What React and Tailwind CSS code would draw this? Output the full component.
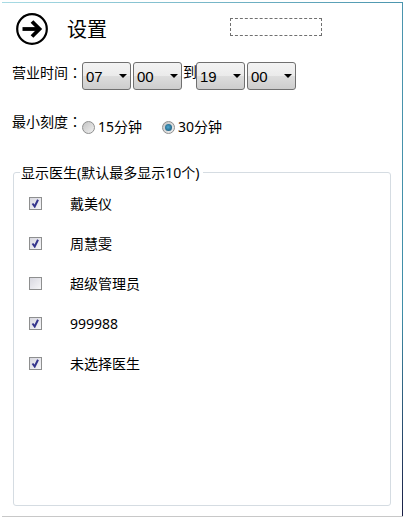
import React from 'react';

const FONT = { fontFamily: '"Noto Sans", "Noto Sans CJK SC", sans-serif' };

const ArrowIcon = () => (
  <svg width="34" height="34" viewBox="0 0 34 34" className="block mb-[2px]">
    <circle cx="17" cy="17" r="14.8" fill="none" stroke="#000" strokeWidth="2.2" />
    <path d="M7.5 17H24" stroke="#000" strokeWidth="3.8" fill="none" />
    <path d="M17 9.5L24.5 17L17 24.5" stroke="#000" strokeWidth="3.8" fill="none" />
  </svg>
);

const Select = ({ value }) => (
  <div className="w-[49px] h-[28px] flex items-center justify-between pl-[3px] pr-[3px] border border-[#707070] rounded-[3px] bg-[linear-gradient(#f3f3f3_0%,#ebebeb_48%,#dddddd_50%,#cdcdcd_100%)] text-[15px] leading-none text-black font-['Liberation_Sans']">
    <span>{value}</span>
    <span className="w-0 h-0 border-x-[4px] border-x-transparent border-t-[4px] border-t-black" />
  </div>
);

const Radio = ({ checked, label, className }) => (
  <div className={`flex items-center ${className}`}>
    <span className="w-[13px] h-[13px] rounded-full border border-[#8e8f8f] bg-[linear-gradient(135deg,#c4c4c4,#f0f0f0)] flex items-center justify-center">
      {checked && <span className="w-[7px] h-[7px] rounded-full bg-[radial-gradient(circle_at_45%_45%,#4fa8d0,#0f4a6a)]" />}
    </span>
    <span className="ml-[3px] text-[14px] leading-[20px] text-black">{label}</span>
  </div>
);

const Doctor = ({ name, checked }) => (
  <div className="h-[40px] flex items-start">
    <span className="mt-[1px] w-[13px] h-[13px] border border-[#8e8f8f] bg-[linear-gradient(135deg,#d8d8e0,#f6f6f8)] flex items-center justify-center">
      {checked && (
        <svg width="9" height="9" viewBox="0 0 9 9">
          <path d="M1.5 4.5L3.7 7.5L7 0.8" stroke="#34348c" strokeWidth="2" fill="none" />
        </svg>
      )}
    </span>
    <span className="ml-[28px] text-[14px] leading-[16px] text-black">{name}</span>
  </div>
);

const Label = ({ text }) => (
  <span className="w-[70px] text-[14px] leading-[20px] text-black whitespace-nowrap">
    {text}
    <span className="font-['Noto_Sans_CJK_TC']">：</span>
  </span>
);

const doctors = [
  { name: '戴美仪', checked: true },
  { name: '周慧雯', checked: true },
  { name: '超级管理员', checked: false },
  { name: '999988', checked: true },
  { name: '未选择医生', checked: true },
];

export default function App() {
  return (
    <div className="w-[405px] h-[519px] bg-white p-[2px]" style={FONT}>
      <div className="h-full flex flex-col border-b border-b-[#c8c8c8]">
        <div className="h-[1px] shrink-0 bg-[linear-gradient(90deg,#a8dbe4,#4b95ae)]" />
        <div className="flex-1 flex min-h-0">
          <div className="flex-1 flex flex-col">
            {/* header */}
            <div className="h-[50px] flex items-center pl-[13px] pt-[3px] relative">
              <ArrowIcon />
              <span className="ml-[18px] text-[20px] leading-none text-black">设置</span>
              <div className="absolute left-[228px] top-[15px] w-[92px] h-[18px] border border-dashed border-[#707070]" />
            </div>

            {/* opening hours */}
            <div className="mt-[9px] h-[28px] flex items-start pl-[10px]">
              <Label text="营业时间" />
              <Select value="07" />
              <div className="w-[2px]" />
              <Select value="00" />
              <span className="ml-[1px] w-[13px] text-[14px] leading-[20px] text-black">到</span>
              <Select value="19" />
              <div className="w-[2px]" />
              <Select value="00" />
            </div>

            {/* min interval */}
            <div className="mt-[21px] h-[31px] flex items-start pl-[10px]">
              <Label text="最小刻度" />
              <Radio label="15分钟" className="mt-[6px]" />
              <Radio checked label="30分钟" className="mt-[6px] ml-[20px]" />
            </div>

            {/* doctors group */}
            <div className="relative mt-[30px] ml-[11px] w-[378px] h-[334px] border border-[#d5dce2] rounded-[3px] pt-[23px] pl-[15px]">
              <span className="absolute left-[6px] top-[-9px] bg-white pl-[1px] pr-[4px] text-[14px] leading-[18px] text-black whitespace-nowrap">
                显示医生(默认最多显示10个)
              </span>
              {doctors.map((d) => (
                <Doctor key={d.name} name={d.name} checked={d.checked} />
              ))}
            </div>
          </div>
          <div className="w-[1px] shrink-0 bg-[linear-gradient(#4b95ae,#3f8ea8_60%,#1a1f45)]" />
        </div>
      </div>
    </div>
  );
}
